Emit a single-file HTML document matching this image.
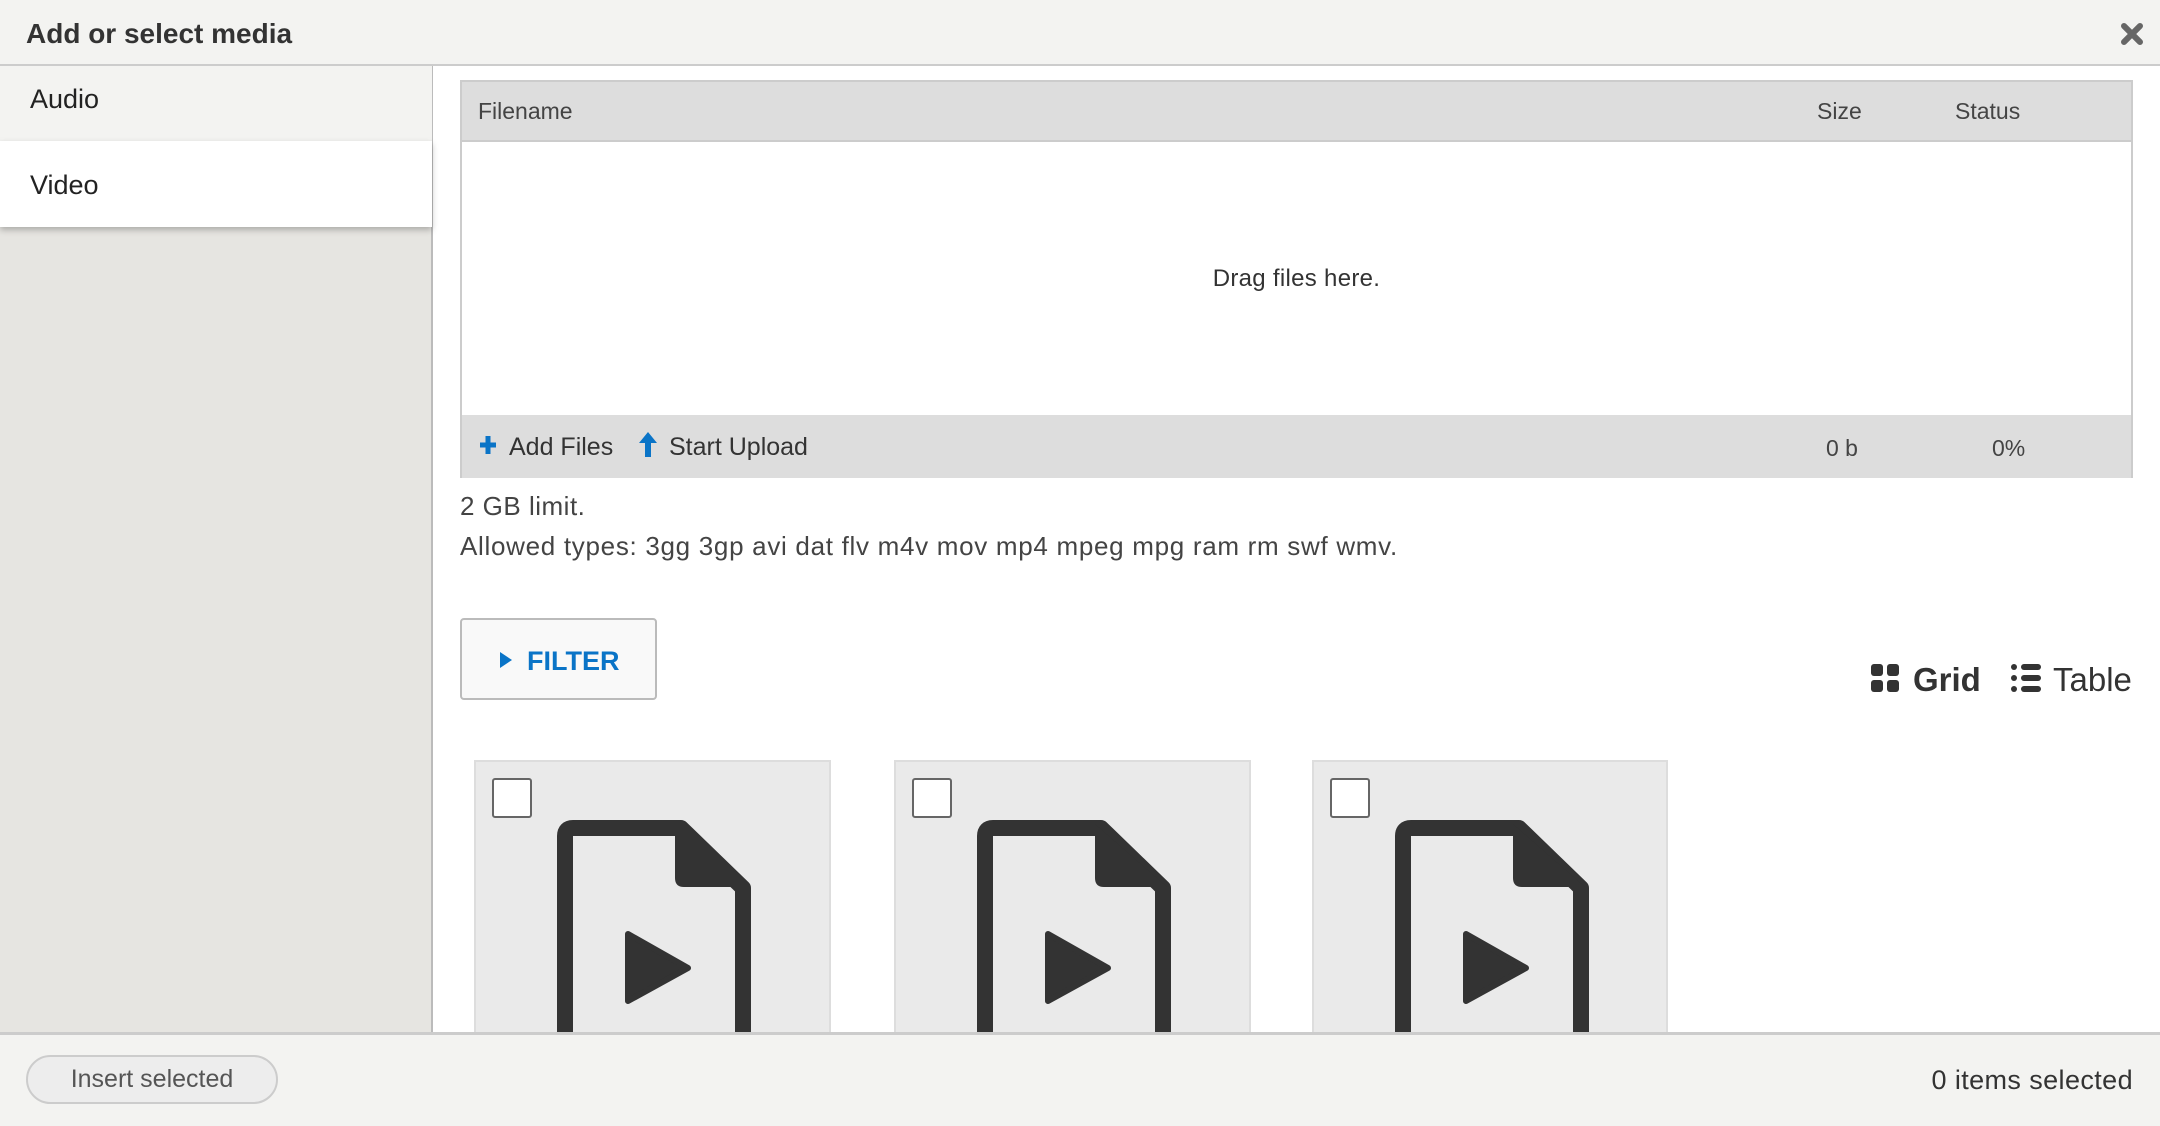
<!DOCTYPE html>
<html><head><meta charset="utf-8"><style>
*{margin:0;padding:0;box-sizing:border-box}
body{width:2160px;height:1126px;overflow:hidden;background:#fff;font-family:"Liberation Sans",sans-serif;color:#333;position:relative}
.a{position:absolute}
.hdr{left:0;top:0;width:2160px;height:66px;background:#f3f3f1;border-bottom:2px solid #ccc}
.title{left:26px;top:18px;font-size:28px;font-weight:bold;color:#333}
.side{left:0;top:66px;width:433px;height:966px;background:#e6e5e1;border-right:2px solid #bbb}
.tab1{left:0;top:66px;width:432px;height:75px;background:#f3f3f1}
.tab2{left:0;top:141px;width:432px;height:86px;background:#fff;box-shadow:0 3px 6px rgba(0,0,0,.25)}
.tabt{font-size:27px;color:#222}
.tbl{left:460px;top:80px;width:1673px;height:398px;border:2px solid #ccc;background:#fff}
.th{left:0;top:0;width:100%;height:60px;background:#ddd;border-bottom:2px solid #ccc}
.tf{left:0;top:333px;width:100%;height:63px;background:#ddd}
.s23{font-size:23px;color:#444}
.card{top:760px;width:357px;height:300px;background:#eaeaea;border:2px solid #ddd}
.cb{left:16px;top:16px;width:40px;height:40px;background:#fff;border:2px solid #666;border-radius:3px}
.ftr{left:0;top:1032px;width:2160px;height:94px;background:#f3f3f1;border-top:3px solid #ccc}
</style></head><body>
<div class="a hdr"></div>
<div class="a title">Add or select media</div>
<svg class="a" style="left:2121px;top:23px" width="22" height="22" viewBox="0 0 22 22"><path d="M3 3L19 19M19 3L3 19" stroke="#666" stroke-width="6" stroke-linecap="round"/></svg>
<div class="a side"></div>
<div class="a tab1"></div>
<div class="a tab2"></div>
<div class="a tabt" style="left:30px;top:84px">Audio</div>
<div class="a tabt" style="left:30px;top:170px">Video</div>

<div class="a tbl">
 <div class="a th"></div>
 <div class="a s23" style="left:16px;top:16px">Filename</div>
 <div class="a s23" style="left:1355px;top:16px">Size</div>
 <div class="a s23" style="left:1493px;top:16px">Status</div>
 <div class="a" style="left:0;width:100%;top:183px;text-align:center;font-size:24px;color:#333;letter-spacing:.3px">Drag files here.</div>
 <div class="a tf"></div>
 <svg class="a" style="left:16px;top:352px" width="20" height="22" viewBox="0 0 20 22"><path d="M10 2V20M2 11H18" stroke="#0a74c7" stroke-width="5"/></svg>
 <div class="a" style="left:47px;top:351px;font-size:25px;color:#333">Add Files</div>
 <svg class="a" style="left:176px;top:349px" width="20" height="28" viewBox="0 0 20 28"><path d="M10 1L19 12H13V26H7V12H1Z" fill="#0a74c7"/></svg>
 <div class="a" style="left:207px;top:351px;font-size:25px;color:#333">Start Upload</div>
 <div class="a s23" style="left:1364px;top:353px">0 b</div>
 <div class="a s23" style="left:1530px;top:353px">0%</div>
</div>

<div class="a" style="left:460px;top:491px;font-size:26px;color:#444;letter-spacing:.5px">2 GB limit.</div>
<div class="a" style="left:460px;top:531px;font-size:26px;color:#444;letter-spacing:.7px">Allowed types: 3gg 3gp avi dat flv m4v mov mp4 mpeg mpg ram rm swf wmv.</div>

<div class="a" style="left:460px;top:618px;width:197px;height:82px;border:2px solid #bbb;border-radius:4px;background:#f9f9f9"></div>
<svg class="a" style="left:499px;top:651px" width="14" height="18" viewBox="0 0 14 18"><path d="M1 1L13 9L1 17Z" fill="#0a74c7"/></svg>
<div class="a" style="left:527px;top:646px;font-size:27px;font-weight:bold;color:#0a74c7">FILTER</div>

<svg class="a" style="left:1871px;top:664px" width="28" height="28" viewBox="0 0 28 28"><rect x="0" y="0" width="12" height="12" rx="3" fill="#333"/><rect x="16" y="0" width="12" height="12" rx="3" fill="#333"/><rect x="0" y="16" width="12" height="12" rx="3" fill="#333"/><rect x="16" y="16" width="12" height="12" rx="3" fill="#333"/></svg>
<div class="a" style="left:1913px;top:661px;font-size:33px;font-weight:bold;color:#333">Grid</div>
<svg class="a" style="left:2011px;top:664px" width="30" height="28" viewBox="0 0 30 28"><circle cx="3" cy="3" r="3" fill="#333"/><circle cx="3" cy="14" r="3" fill="#333"/><circle cx="3" cy="25" r="3" fill="#333"/><rect x="10" y="0" width="20" height="6" rx="3" fill="#333"/><rect x="10" y="11" width="20" height="6" rx="3" fill="#333"/><rect x="10" y="22" width="20" height="6" rx="3" fill="#333"/></svg>
<div class="a" style="left:2053px;top:661px;font-size:33px;color:#333">Table</div>

<div class="a card" style="left:474px"><div class="a cb"></div><svg class="a" style="left:0;top:0" width="357" height="300"><path d="M89,300 V74 q0,-8 8,-8 H205 L267,126 V300" fill="none" stroke="#333" stroke-width="16" stroke-linejoin="round"/><path d="M199,62 V116 q0,9 9,9 H271 Z" fill="#333"/><path d="M152,172 L212,206 L152,239 Z" fill="#333" stroke="#333" stroke-width="6" stroke-linejoin="round"/></svg></div>
<div class="a card" style="left:894px"><div class="a cb"></div><svg class="a" style="left:0;top:0" width="357" height="300"><path d="M89,300 V74 q0,-8 8,-8 H205 L267,126 V300" fill="none" stroke="#333" stroke-width="16" stroke-linejoin="round"/><path d="M199,62 V116 q0,9 9,9 H271 Z" fill="#333"/><path d="M152,172 L212,206 L152,239 Z" fill="#333" stroke="#333" stroke-width="6" stroke-linejoin="round"/></svg></div>
<div class="a card" style="left:1312px;width:356px"><div class="a cb"></div><svg class="a" style="left:0;top:0" width="357" height="300"><path d="M89,300 V74 q0,-8 8,-8 H205 L267,126 V300" fill="none" stroke="#333" stroke-width="16" stroke-linejoin="round"/><path d="M199,62 V116 q0,9 9,9 H271 Z" fill="#333"/><path d="M152,172 L212,206 L152,239 Z" fill="#333" stroke="#333" stroke-width="6" stroke-linejoin="round"/></svg></div>

<div class="a ftr"></div>
<div class="a" style="left:26px;top:1055px;width:252px;height:49px;border:2px solid #ccc;border-radius:25px;background:#ededed;text-align:center;line-height:45px;font-size:25px;color:#555">Insert selected</div>
<div class="a" style="right:27px;top:1065px;font-size:27px;color:#333;letter-spacing:.4px">0 items selected</div>
</body></html>
